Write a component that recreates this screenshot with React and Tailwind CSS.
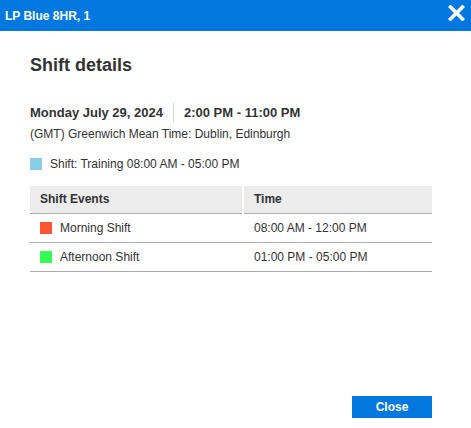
export default function App() {
  const rows = [
    { name: "Morning Shift", time: "08:00 AM - 12:00 PM", color: "bg-[#ff5533]" },
    { name: "Afternoon Shift", time: "01:00 PM - 05:00 PM", color: "bg-[#33ff55]" },
  ];

  return (
    <div className="relative h-[428px] w-[471px] bg-white font-['Liberation_Sans',Arial,sans-serif] text-[#333]">
      <div className="flex h-[31px] items-center justify-between bg-[#0078e0] pl-[5px] pr-[6px]">
        <span className="text-[12px] font-bold text-white">LP Blue 8HR, 1</span>
        <svg width="17" height="16" viewBox="0 0 17 16" className="mt-[-5px]">
          <path d="M2.5 2 L14.5 14 M14.5 2 L2.5 14" stroke="white" strokeWidth="3.6" strokeLinecap="square" />
        </svg>
      </div>

      <div className="px-[30px]">
        <h2 className="mt-[22px] text-[18px] font-bold leading-[24px]">Shift details</h2>

        <div className="mt-[26px] flex items-center text-[13px] font-bold">
          <span>Monday July 29, 2024</span>
          <span className="mx-[10px] h-[19px] w-px bg-[#d6d6d6]" />
          <span>2:00 PM - 11:00 PM</span>
        </div>
        <div className="mt-[3px] text-[12px] leading-[16px]">(GMT) Greenwich Mean Time: Dublin, Edinburgh</div>

        <div className="mt-[13px] flex items-center gap-[8px] text-[12px]">
          <span className="h-[12px] w-[12px] bg-[#87cfe8]" />
          <span>Shift: Training 08:00 AM - 05:00 PM</span>
        </div>

        <table className="mt-[13px] w-[402px] border-collapse text-[12px]">
          <thead>
            <tr className="h-[28px] border-b border-[#a9adb3] bg-[#ececec]">
              <th className="w-[213px] border-r-2 border-white pl-[10px] text-left font-bold">Shift Events</th>
              <th className="pl-[10px] text-left font-bold">Time</th>
            </tr>
          </thead>
          <tbody>
            {rows.map((r) => (
              <tr key={r.name} className="h-[29px] border-b border-[#a9adb3]">
                <td className="pl-[10px]">
                  <div className="flex items-center gap-[8px]">
                    <span className={`h-[12px] w-[12px] ${r.color}`} />
                    <span>{r.name}</span>
                  </div>
                </td>
                <td className="pl-[11px]">{r.time}</td>
              </tr>
            ))}
          </tbody>
        </table>
      </div>

      <button className="absolute left-[352px] top-[396px] h-[22px] w-[80px] bg-[#0078e0] text-[12px] font-bold text-white">
        Close
      </button>
    </div>
  );
}
